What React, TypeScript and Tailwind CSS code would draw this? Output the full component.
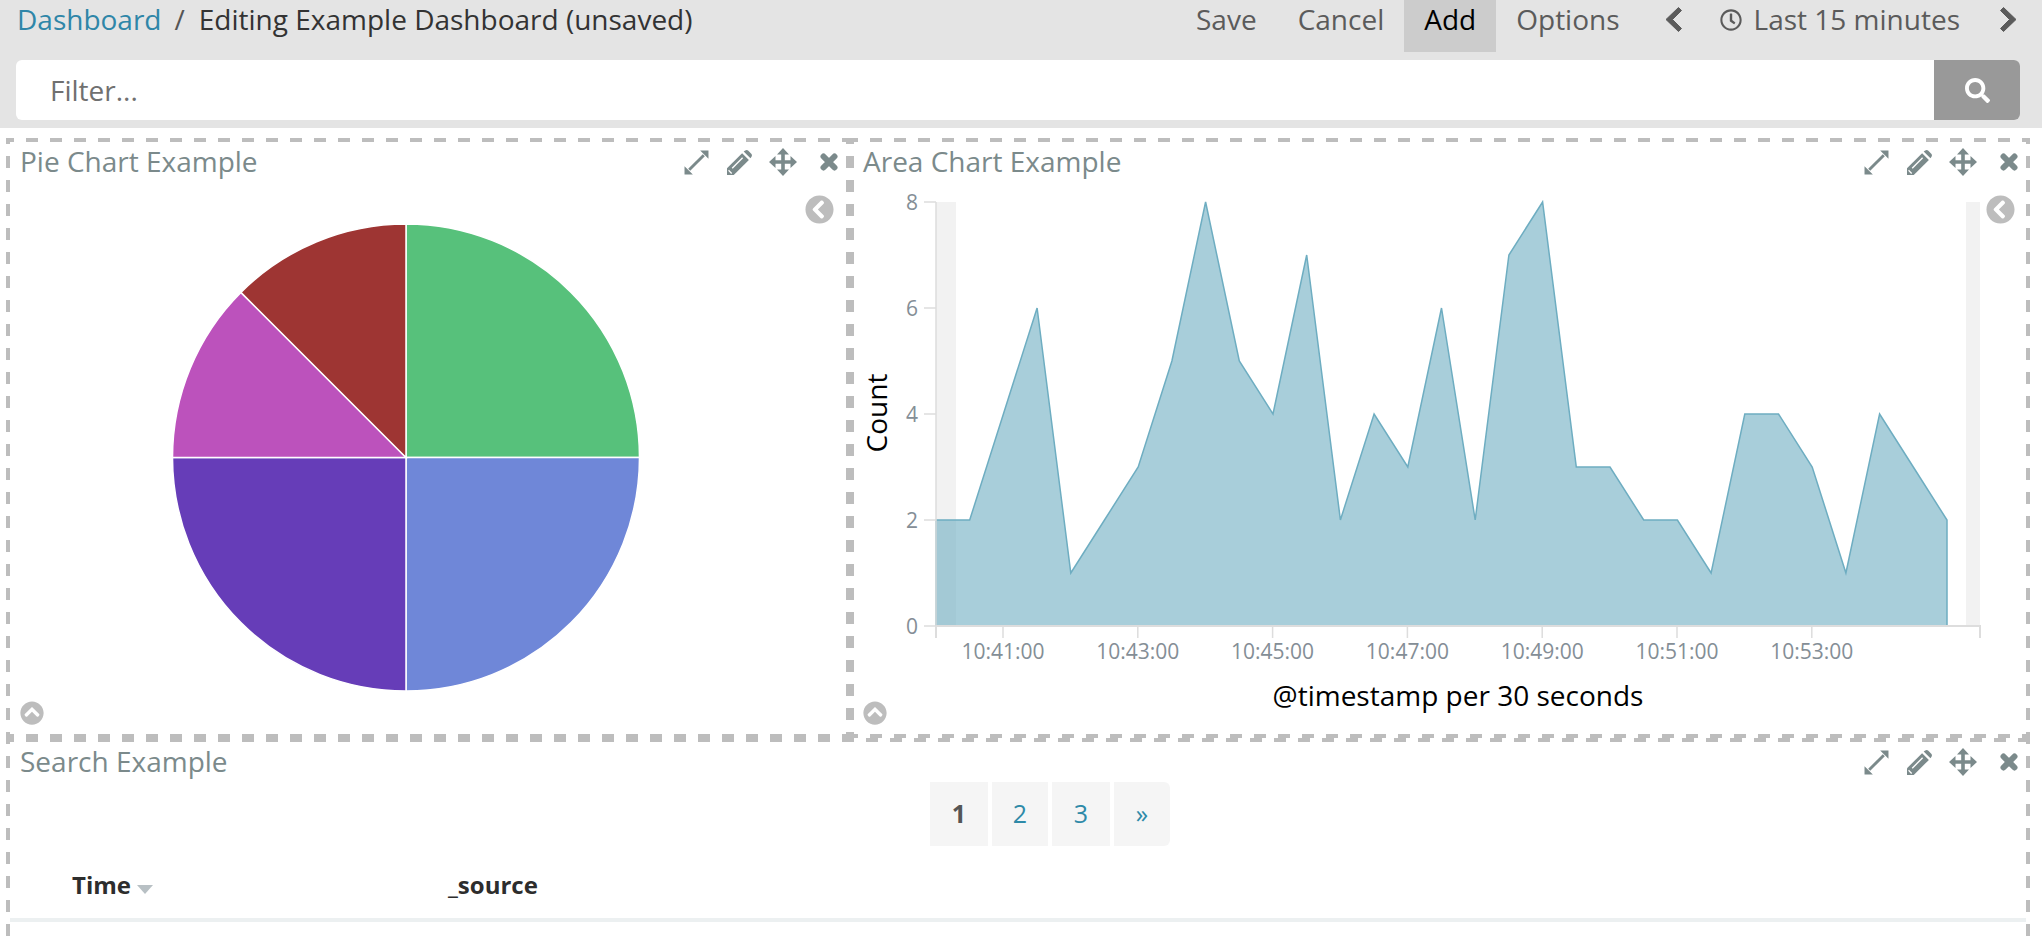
import React from "react";
import { FaRegClock, FaSearch, FaChevronCircleLeft, FaChevronCircleUp } from "react-icons/fa";

const hDash = "absolute h-[4px] bg-[repeating-linear-gradient(90deg,#bdbdbd_0,#bdbdbd_8px,transparent_8px,transparent_20px,#bdbdbd_20px,#bdbdbd_24px)]";
const vDash = "absolute w-[4px] bg-[repeating-linear-gradient(180deg,#bdbdbd_0,#bdbdbd_6px,transparent_6px,transparent_18px,#bdbdbd_18px,#bdbdbd_24px)]";

function Edges() {
  return (
    <>
      <div className={`${hDash} left-0 right-0 top-0`} />
      <div className={`${hDash} left-0 right-0 bottom-0`} />
      <div className={`${vDash} left-0 top-0 bottom-0`} />
      <div className={`${vDash} right-0 top-0 bottom-0`} />
    </>
  );
}

function ExpandIcon() {
  return (
    <svg viewBox="0 0 24 24" className="w-[25px] h-[25px]" fill="currentColor">
      <path d="M19 5L5 19" stroke="currentColor" strokeWidth="2.8" fill="none" />
      <path d="M15.5 0.5H23.5V8.5ZM0.5 15.5L8.5 23.5H0.5Z" />
    </svg>
  );
}

function PencilIcon() {
  return (
    <svg viewBox="0 0 24 24" className="w-[25px] h-[25px]" fill="currentColor">
      <path d="M0 24V17.5L14.5 3 21 9.5 6.5 24Z" />
      <path d="M16 1.5L17.5.5Q19-.5 20.5.7L23.3 3.5Q24.5 5 23.5 6.5L22.5 8Z" />
      <path d="M5 17.5L15 7.5" stroke="#fff" strokeWidth="1.3" fill="none" />
      <path d="M1.5 19.5L4.5 22.5" stroke="#fff" strokeWidth="1.2" fill="none" />
    </svg>
  );
}

function MoveIcon() {
  return (
    <svg viewBox="0 0 28 28" className="w-[28px] h-[28px]" fill="currentColor">
      <path d="M14 4V24M4 14H24" stroke="currentColor" strokeWidth="3.6" fill="none" />
      <path d="M14 0L20 6.5H8ZM14 28L8 21.5H20ZM0 14L6.5 8V20ZM28 14L21.5 20V8Z" />
    </svg>
  );
}

function CloseIcon() {
  return (
    <svg viewBox="0 0 18 18" className="w-[18px] h-[18px]" fill="none">
      <path d="M3.5 3.5L14.5 14.5M14.5 3.5L3.5 14.5" stroke="currentColor" strokeWidth="6" strokeLinecap="round" />
    </svg>
  );
}

function ChevronLeftIcon({ cls }: { cls: string }) {
  return (
    <svg viewBox="0 0 19 25" className={`w-[19px] h-[25px] text-[#5b5b5b] ${cls}`} fill="currentColor">
      <path d="M18.5 3.5L15.5 0.5 3 12.5 15.5 24.5 18.5 21.5 9.5 12.5Z" stroke="currentColor" strokeWidth="1" strokeLinejoin="round" />
    </svg>
  );
}

function ChevronRightIcon({ cls }: { cls: string }) {
  return (
    <svg viewBox="0 0 19 25" className={`w-[19px] h-[25px] text-[#5b5b5b] ${cls}`} fill="currentColor">
      <path d="M0.5 3.5L3.5 0.5 16 12.5 3.5 24.5 0.5 21.5 9.5 12.5Z" stroke="currentColor" strokeWidth="1" strokeLinejoin="round" />
    </svg>
  );
}

function PanelHead({ title, pl }: { title: string; pl: string }) {
  return (
    <div className={`flex items-center justify-between h-[38px] pr-[8px] ${pl}`}>
      <span className="text-[28px] leading-[38px] text-[#7b8a8b]">{title}</span>
      <div className="flex items-center mt-[2px] text-[#7b8a8b]">
        <span className="mr-[18px] flex"><ExpandIcon /></span>
        <span className="mr-[17px] flex"><PencilIcon /></span>
        <span className="mr-[23px] flex"><MoveIcon /></span>
        <CloseIcon />
      </div>
    </div>
  );
}

function Pie() {
  const cx = 406, cy = 457.5, r = 233.5;
  const p = (deg: number) => {
    const a = ((deg - 90) * Math.PI) / 180;
    return `${cx + r * Math.cos(a)} ${cy + r * Math.sin(a)}`;
  };
  const slices: [number, number, string][] = [
    [0, 90, "#57c17b"],
    [90, 180, "#6f87d8"],
    [180, 270, "#663db8"],
    [270, 315, "#bc52bc"],
    [315, 360, "#9e3533"],
  ];
  return (
    <svg className="absolute left-0 top-0" width="840" height="600" viewBox="0 0 840 600">
      <g transform="translate(-6 -138)">
        {slices.map(([a, b, c]) => (
          <path key={a} d={`M${cx} ${cy}L${p(a)}A${r} ${r} 0 0 1 ${p(b)}Z`} fill={c} stroke="#fff" strokeWidth="1.5" />
        ))}
      </g>
    </svg>
  );
}

const vals = [2,2,4,6,1,2,3,5,8,5,4,7,2,4,3,6,2,7,8,3,3,2,2,1,4,4,3,1,4,3,2];

function Area() {
  const x0 = 936, step = 33.7, y0 = 626, u = 53;
  const X = (i: number) => x0 + i * step;
  const Y = (v: number) => y0 - v * u;
  const line = vals.map((v, i) => `${X(i)} ${Y(v)}`).join("L");
  const area = `M${x0} ${y0}L${line}L${X(30)} ${y0}Z`;
  const ticks = ["10:41:00","10:43:00","10:45:00","10:47:00","10:49:00","10:51:00","10:53:00"];
  return (
    <svg className="absolute left-0 top-0" width="1180" height="600" viewBox="0 0 1180 600" fontFamily="'Open Sans', sans-serif">
      <g transform="translate(-850 -138)">
        <rect x="936" y="202" width="20" height="424" fill="#f2f2f2" />
        <rect x="1966" y="202" width="14" height="424" fill="#f2f2f2" />
        <path d={area} fill="#6eadc1" fillOpacity="0.6" />
        <path d={`M${x0} ${y0}L${line}L${X(30)} ${y0}`} fill="none" stroke="#6eadc1" strokeWidth="1.5" />
        <path d="M936 202V626" stroke="#ddd" strokeWidth="1.5" fill="none" />
        <path d="M936 626H1980V638M936 626V638" stroke="#ddd" strokeWidth="2" fill="none" />
        {[0,2,4,6,8].map((v) => (
          <g key={v}>
            <path d={`M924 ${Y(v)}H936`} stroke="#ddd" strokeWidth="1.5" />
            <text x="918" y={Y(v) + 8} textAnchor="end" fontSize="21" fill="#848e96">{v}</text>
          </g>
        ))}
        {ticks.map((t, i) => (
          <g key={t}>
            <path d={`M${1003 + i * 134.8} 626V638`} stroke="#ddd" strokeWidth="1.5" />
            <text x={1003 + i * 134.8} y="659" textAnchor="middle" fontSize="21" fill="#848e96">{t}</text>
          </g>
        ))}
        <text x="1458" y="706" textAnchor="middle" fontSize="28" fill="#000">@timestamp per 30 seconds</text>
        <text transform="translate(887 413) rotate(-90)" textAnchor="middle" fontSize="28" fill="#000">Count</text>
      </g>
    </svg>
  );
}

function Nav({ children, cls = "" }: { children: React.ReactNode; cls?: string }) {
  return <span className={`flex items-center h-[52px] pb-[14px] text-[#5b5b5b] ${cls}`}>{children}</span>;
}

const pageBtn = "h-[64px] flex items-center justify-center bg-[#f5f5f5]";

export default function App() {
  return (
    <div className="h-[938px] w-[2042px] overflow-hidden bg-white font-['Open_Sans',sans-serif]">
      <div className="h-[128px] bg-[#e4e4e4] flex flex-col">
        <div className="h-[52px] flex items-center justify-between pl-[17px] pr-[23px] text-[28px]">
          <div className="flex items-center pb-[14px]">
            <span className="text-[#2f86a8]">Dashboard</span>
            <span className="text-[#555] ml-[13px] mr-[14px]">/</span>
            <span className="text-[#333]">Editing Example Dashboard (unsaved)</span>
          </div>
          <div className="flex items-center">
            <Nav cls="mr-[41px]">Save</Nav>
            <Nav cls="mr-[20px]">Cancel</Nav>
            <Nav cls="w-[92px] justify-center bg-[#cccccc] text-black">Add</Nav>
            <Nav cls="ml-[20px] mr-[43px]">Options</Nav>
            <ChevronLeftIcon cls="mr-[38px] mb-[14px]" />
            <FaRegClock className="w-[22px] h-[22px] text-[#5b5b5b] mr-[12px] mb-[12px]" />
            <Nav cls="mr-[40px]">Last 15 minutes</Nav>
            <ChevronRightIcon cls="mb-[14px]" />
          </div>
        </div>
        <div className="mt-[8px] mx-[16px] h-[60px] flex bg-white rounded-[6px] overflow-hidden w-[2004px]">
          <div className="flex-1 flex items-center pl-[34px] text-[28px] text-[#707070]">Filter...</div>
          <div className="w-[86px] bg-[#999999] flex items-center justify-center text-white">
            <FaSearch className="w-[25px] h-[25px]" />
          </div>
        </div>
      </div>

      <div className="pl-[6px] pr-[12px] pt-[10px]">
        <div className="grid grid-cols-[844px_1fr] grid-rows-[600px_1fr]">
          <div className="relative h-[600px]">
            <Edges />
            <Pie />
            <div className="relative pt-[4px] px-[4px]"><PanelHead title="Pie Chart Example" pl="pl-[10px]" /></div>
            <FaChevronCircleLeft className="absolute right-[16px] top-[57px] w-[29px] h-[29px] text-[#bdbdbd]" />
            <FaChevronCircleUp className="absolute left-[14px] bottom-[13px] w-[24px] h-[24px] text-[#bdbdbd]" />
          </div>
          <div className="relative h-[600px]">
            <Edges />
            <Area />
            <div className="relative pt-[4px] px-[4px]"><PanelHead title="Area Chart Example" pl="pl-[9px]" /></div>
            <FaChevronCircleLeft className="absolute right-[15px] top-[57px] w-[29px] h-[29px] text-[#bdbdbd]" />
            <FaChevronCircleUp className="absolute left-[13px] bottom-[13px] w-[24px] h-[24px] text-[#bdbdbd]" />
          </div>
          <div className="relative col-span-2 h-[300px]">
            <Edges />
            <div className="pt-[4px] px-[4px]"><PanelHead title="Search Example" pl="pl-[10px]" /></div>
            <div className="flex justify-center gap-[4px] mt-[2px] ml-[64px] text-[25px] text-[#2e8aa8]">
              <span className={`${pageBtn} w-[58px] text-[#555] font-bold`}>1</span>
              <span className={`${pageBtn} w-[56px]`}>2</span>
              <span className={`${pageBtn} w-[58px]`}>3</span>
              <span className={`${pageBtn} w-[56px] rounded-r-[6px]`}>»</span>
            </div>
            <div className="flex items-center h-[62px] mt-[14px] pl-[62px] pb-[8px] text-[24px] font-bold text-[#2d2d2d] border-b-[4px] border-[#ecf0f1] mx-[4px]">
              <span className="w-[376px] flex items-center">Time<span className="ml-[6px] mt-[8px] border-x-[8px] border-t-[9px] border-x-transparent border-t-[#b8c0c4]" /></span>
              <span>_source</span>
            </div>
          </div>
        </div>
      </div>
    </div>
  );
}
